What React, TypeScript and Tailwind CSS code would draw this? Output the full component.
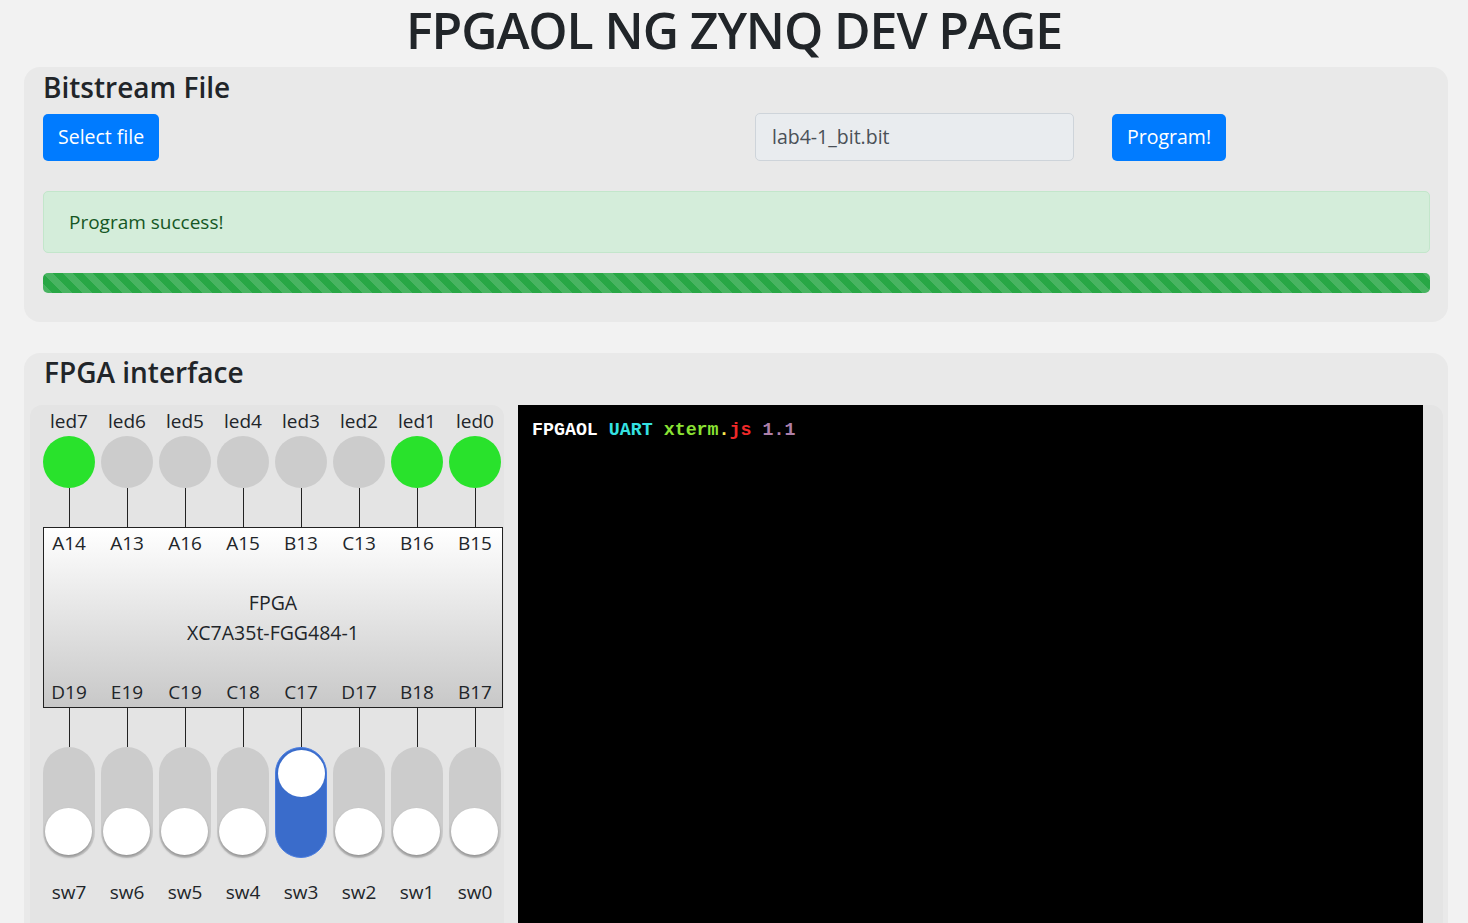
import React from 'react'

const leds = [
  { name: 'led7', pin: 'A14', on: true },
  { name: 'led6', pin: 'A13', on: false },
  { name: 'led5', pin: 'A16', on: false },
  { name: 'led4', pin: 'A15', on: false },
  { name: 'led3', pin: 'B13', on: false },
  { name: 'led2', pin: 'C13', on: false },
  { name: 'led1', pin: 'B16', on: true },
  { name: 'led0', pin: 'B15', on: true },
]

const switches = [
  { name: 'sw7', pin: 'D19', on: false },
  { name: 'sw6', pin: 'E19', on: false },
  { name: 'sw5', pin: 'C19', on: false },
  { name: 'sw4', pin: 'C18', on: false },
  { name: 'sw3', pin: 'C17', on: true },
  { name: 'sw2', pin: 'D17', on: false },
  { name: 'sw1', pin: 'B18', on: false },
  { name: 'sw0', pin: 'B17', on: false },
]

function Wires() {
  return (
    <div className="flex gap-[6px] h-[39px]">
      {leds.map((l) => (
        <div key={l.name} className="w-[52px] flex justify-center">
          <div className="w-px h-full bg-[#222]" />
        </div>
      ))}
    </div>
  )
}

function Switch({ on }: { on: boolean }) {
  if (on) {
    return (
      <div className="w-[52px] h-[111px] rounded-full bg-[#3a6ccb] border border-[#4a7de0] p-[2px] flex flex-col">
        <div className="w-[47px] h-[47px] rounded-full bg-white" />
      </div>
    )
  }
  return (
    <div className="w-[52px] h-[111px] rounded-full bg-[#cccccc] px-[2px] pb-[3px] flex flex-col justify-end">
      <div className="w-[47px] h-[47px] rounded-full bg-white shadow-[0_2px_3px_rgba(0,0,0,0.3)]" />
    </div>
  )
}

export default function App() {
  return (
    <div className="min-h-screen bg-[#f2f2f2] text-[#212529] pb-10" style={{ fontFamily: '"Open Sans", "Noto Sans", sans-serif' }}>
      <div className="h-[67px] flex items-start justify-center">
        <h1 className="text-[50px] font-semibold tracking-[-1.1px] leading-[66px] -mt-[3px]">FPGAOL NG ZYNQ DEV PAGE</h1>
      </div>

      <div className="ml-[24px] mr-[20px] rounded-2xl bg-[#e9e9e9] pl-[19px] pr-[18px] pt-[3px] pb-[29px]">
        <h3 className="text-[28px] font-semibold leading-[34px] mb-[9px]">Bitstream File</h3>
        <div className="flex items-center">
          <div className="w-[712px]">
            <button className="h-[47px] px-[15px] rounded-[5px] bg-[#007bff] text-white text-[19.5px]">Select file</button>
          </div>
          <div className="w-[319px] h-[48px] rounded-[5px] bg-[#e9ecef] border border-[#ced4da] px-4 flex items-center text-[19.5px] text-[#495057]">
            lab4-1_bit.bit
          </div>
          <button className="ml-[38px] h-[47px] px-[15px] rounded-[5px] bg-[#007bff] text-white text-[19.5px]">Program!</button>
        </div>
        <div className="mt-[30px] h-[62px] rounded-[5px] bg-[#d4edda] border border-[#c3e6cb] px-[25px] flex items-center text-[19px] text-[#155724]">
          Program success!
        </div>
        <div className="mt-[20px] h-[20px] rounded-[5px] bg-[#28a745] bg-[linear-gradient(45deg,rgba(255,255,255,0.15)_25%,transparent_25%,transparent_50%,rgba(255,255,255,0.15)_50%,rgba(255,255,255,0.15)_75%,transparent_75%,transparent)] bg-[length:20px_20px]" />
      </div>

      <div className="ml-[24px] mr-[20px] mt-[31px] rounded-2xl bg-[#e9e9e9] pt-[2px]">
        <h3 className="px-[20px] text-[28px] font-semibold leading-[34px] mb-[16px]">FPGA interface</h3>
        <div className="flex gap-[14px] pl-[6px] pr-[5px]">
          <div className="w-[474px] rounded-t-xl bg-[#e4e4e4] pl-[13px] pt-[1px] pb-[16px] text-[19px]">
            <div className="flex gap-[6px]">
              {leds.map((l) => (
                <div key={l.name} className="w-[52px] flex flex-col items-center">
                  <div className="h-[30px] leading-[30px]">{l.name}</div>
                  <div className={`w-[52px] h-[52px] rounded-full ${l.on ? 'bg-[#29e22c]' : 'bg-[#cccccc]'}`} />
                </div>
              ))}
            </div>
            <Wires />
            <div className="w-[460px] border border-[#222] bg-[linear-gradient(180deg,#ffffff_0%,#c8c8c8_100%)] flex flex-col">
              <div className="flex gap-[6px] -ml-px">
                {leds.map((l) => (
                  <div key={l.pin} className="w-[52px] text-center h-[30px] leading-[30px]">{l.pin}</div>
                ))}
              </div>
              <div className="mt-[30px] text-center text-[19.5px] leading-[30px]">
                <div>FPGA</div>
                <div>XC7A35t-FGG484-1</div>
              </div>
              <div className="mt-[29px] flex gap-[6px] -ml-px">
                {switches.map((s) => (
                  <div key={s.pin} className="w-[52px] text-center h-[30px] leading-[30px]">{s.pin}</div>
                ))}
              </div>
            </div>
            <Wires />
            <div className="flex gap-[6px]">
              {switches.map((s) => (
                <div key={s.name} className="w-[52px] flex flex-col items-center">
                  <Switch on={s.on} />
                  <div className="mt-[19px] h-[30px] leading-[30px]">{s.name}</div>
                </div>
              ))}
            </div>
          </div>
          <div className="flex-1 rounded-tr-xl bg-[#e4e4e4] flex">
            <div className="w-[905px] min-h-[560px] bg-black px-[14px] pt-[15px] text-[18.3px] leading-[20px] font-bold" style={{ fontFamily: '"Liberation Mono", "Courier New", monospace' }}>
              <span className="text-white">FPGAOL</span>{' '}
              <span className="text-[#34e2e2]">UART</span>{' '}
              <span className="text-[#8ae234]">xterm</span>
              <span className="text-[#fce94f]">.</span>
              <span className="text-[#ef2929]">js</span>{' '}
              <span className="text-[#ad7fa8]">1.1</span>
            </div>
          </div>
        </div>
      </div>
    </div>
  )
}
